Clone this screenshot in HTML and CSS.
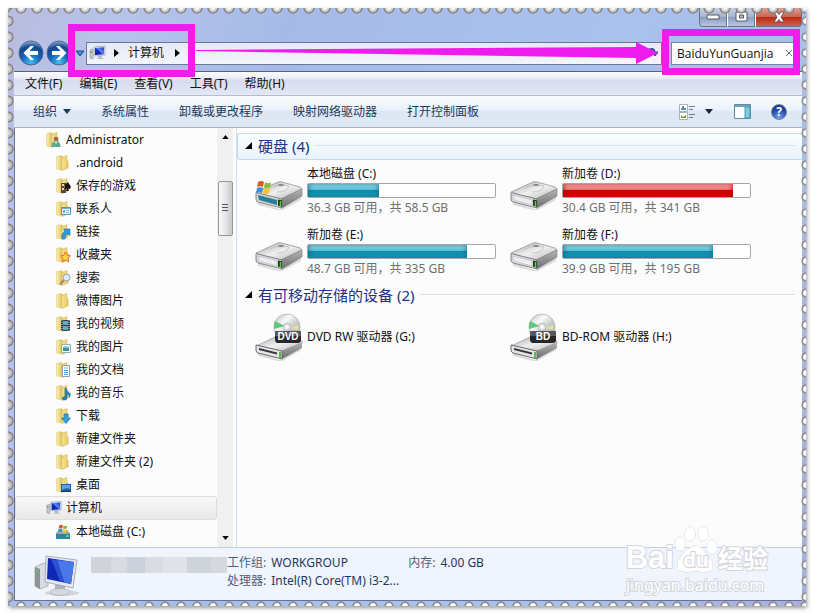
FILE: index.html
```html
<!doctype html>
<html lang="zh-CN">
<head>
  <meta charset="UTF-8">
  <meta name="viewport" content="width=device-width, initial-scale=1">
  <title>计算机</title>
  <link rel="stylesheet" href="styles.css">
</head>
<body>
  <svg class="defs" aria-hidden="true">
    <defs>
      <linearGradient id="gFolder" x1="0" x2="1"><stop offset="0" stop-color="#faf0b4"/><stop offset="1" stop-color="#dfbf57"/></linearGradient>
      <linearGradient id="gScreen" x1="0" y1="1" x2="1" y2="0"><stop offset="0" stop-color="#0a1b9c"/><stop offset=".48" stop-color="#1730cf"/><stop offset=".52" stop-color="#5f8bf0"/><stop offset="1" stop-color="#1a38c8"/></linearGradient>
      <linearGradient id="gMetal" x1="0" x2="1" y2="1"><stop offset="0" stop-color="#a2a2a4"/><stop offset=".5" stop-color="#f0f0f1"/><stop offset="1" stop-color="#b4b4b6"/></linearGradient>
      <linearGradient id="gSide" x1="0" y1="0" x2="0" y2="1"><stop offset="0" stop-color="#b5b5b8"/><stop offset="1" stop-color="#6d6d70"/></linearGradient>
      <linearGradient id="gDisc" x1="0" x2="1" y2="1"><stop offset="0" stop-color="#b9b9b9"/><stop offset=".35" stop-color="#fafafa"/><stop offset=".6" stop-color="#c9c9c9"/><stop offset="1" stop-color="#9d9d9d"/></linearGradient>
      <radialGradient id="gNav" cx=".5" cy=".9" r=".9"><stop offset="0" stop-color="#41c0f2"/><stop offset=".45" stop-color="#1464bb"/><stop offset=".75" stop-color="#15468e"/><stop offset="1" stop-color="#8eb3df"/></radialGradient>
      <symbol id="folder" viewBox="0 0 16 16">
        <path d="M1.500 1.500l5-1 1 1v13.500l-6-1z" fill="url(#gFolder)" stroke="#dcc377" stroke-width=".5"/>
        <path d="M7 2.500l5-2v13l-5 2z" fill="#efd678" stroke="#d3b052" stroke-width=".5"/>
        <path d="M12 5l1.500 1v6.500L12 14z" fill="#e4c462"/>
        <path d="M8 3.500v10.500" stroke="#fbeeb0" stroke-width=".8"/>
      </symbol>
      <symbol id="pc" viewBox="0 0 18 16">
        <path d="M1 5l3-1v10l-3-1z" fill="#c8ccd0" stroke="#8b9299" stroke-width=".6"/><path d="M2 6v2" stroke="#2fa43a"/>
        <path d="M5 2l11-1v9l-11 1z" fill="#dce2ea" stroke="#9aa4b3" stroke-width=".7"/>
        <path d="M6 3l9-.8v7L6 10z" fill="url(#gScreen)"/>
        <path d="M9 11l4-.5v2l2 1.500H7l2-1z" fill="#b6bcc3"/>
      </symbol>
      <symbol id="hdd" viewBox="0 0 48 30">
        <path d="M3 22l22 7 21-13v4L26 31 3 25z" fill="#000" opacity=".12"/>
        <path d="M1 12L23 2q2-.6 4 0l18 5q2 1 2 2L26 19 2 14z" fill="url(#gMetal)" stroke="#8d8d90" stroke-width=".7"/>
        <path d="M26 19L47 9v7L27 28z" fill="url(#gSide)" stroke="#7d7d80" stroke-width=".6"/>
        <path d="M1 13q0-1 2 0l24 6v9L3 22q-2-.5-2-3z" fill="#d9d9db" stroke="#77777a" stroke-width=".9"/>
        <path d="M3 15l19 5v5L4 20z" fill="#eeeef2" stroke="#b2b2b8" stroke-width=".5"/>
        <path d="M23 19.500l4 .8v6.500l-4-1z" fill="#203a1b"/><path d="M25.500 21v5" stroke="#55d23f" stroke-width="1.500"/>
        <path d="M14 9q8-6 20-3-2 6-12 6" fill="none" stroke="#bcbcbe" stroke-width=".8"/><ellipse cx="26" cy="5" rx="3" ry="1" fill="#858588"/>
      </symbol>
      <symbol id="flag" viewBox="0 0 16 16">
        <path d="M2 2q3-2 6 0l-1 5q-3-1.500-6 0z" fill="#e3572d"/><path d="M9 2.300q3 1.700 6 0l-1 5q-3 1.500-6 0z" fill="#86bd34"/>
        <path d="M1 8q3-1.700 6 0l-1 5q-3-1.700-6 0z" fill="#3c8fd4"/><path d="M8 8.300q3 1.500 6 0l-1 5q-3 1.600-6 0z" fill="#f7c631"/>
      </symbol>
      <symbol id="optical" viewBox="0 0 48 48">
        <path d="M3 40l22 7 21-13v3L26 49 3 43z" fill="#000" opacity=".12"/>
        <path d="M1 33l21-10 25 5v3L26 39 2 34z" fill="url(#gMetal)" stroke="#8d8d90" stroke-width=".6"/>
        <path d="M26 38l21-9v6L27 46z" fill="url(#gSide)"/>
        <path d="M1 32l26 6v8L3 40q-2-1-2-3z" fill="#e4e4e6" stroke="#68686b"/>
        <path d="M4 35l18 4.500v2L4 37z" fill="#33353a"/><path d="M25 39v6" stroke="#4cc63a" stroke-width="2"/>
        <circle cx="32" cy="14" r="13" fill="url(#gDisc)" stroke="#aaa" stroke-width=".7"/>
        <path d="M30 13L20 8q-1.500 3-1 8z" fill="#62c77d"/><path d="M34 15l9 2 1-5z" fill="#e4e0a4"/>
        <circle cx="32" cy="14" r="4" fill="#ddd" stroke="#aaa" stroke-width=".6"/><circle cx="32" cy="14" r="1.800" fill="#fff"/>
        <path d="M20 18h26v10q-1 2-3 2H22q-2-1-2-3z" fill="#242629"/><path d="M20 18h26v5H20z" fill="#55585d"/>
      </symbol>
    </defs>
  </svg>

  <div class="stamp">
    <header class="titlebar">
      <div class="caption">
        <button type="button" aria-label="最小化"><svg width="14" height="6" viewBox="0 0 14 6"><path d="M1 1h12v4H1z" fill="#fff" stroke="#555b68"/></svg></button>
        <button type="button" aria-label="最大化"><svg width="13" height="11" viewBox="0 0 13 11"><path d="M1 1h11v9H1z" fill="#fff" stroke="#555b68"/><path d="M4.500 4h4v3h-4z" fill="#aebddd" stroke="#555b68"/></svg></button>
        <button type="button" class="close" aria-label="关闭"><svg width="14" height="12" viewBox="0 0 14 12"><path d="M2 1h3l2 2.500L9 1h3L9 6l3 5H9L7 8.500 5 11H2l3-5z" fill="#fff" stroke="#5c4450" stroke-width=".8"/></svg></button>
      </div>
      <div class="navbar">
        <button type="button" class="nav-button" aria-label="后退"><svg viewBox="0 0 26 26"><circle cx="13" cy="13" r="12" fill="url(#gNav)" stroke="#4c6895"/><path d="M12.500 6h3.500l-4.500 5H20v4h-8.500l4.500 5h-3.500L5.500 13z" fill="#fff"/></svg></button>
        <button type="button" class="nav-button" aria-label="前进"><svg viewBox="0 0 26 26"><circle cx="13" cy="13" r="12" fill="url(#gNav)" stroke="#4c6895"/><path d="M13.500 6H10l4.500 5H6v4h8.500L10 20h3.500l7-7z" fill="#fff"/></svg></button>
        <button type="button" class="recent" aria-label="最近的页面"><svg width="10" height="7" viewBox="0 0 10 7"><path d="M1 1h8L5 6z" fill="#3e8fd0" stroke="#174b86"/></svg></button>
        <div class="address">
          <svg class="pc" viewBox="0 0 18 16"><use href="#pc"/></svg>
          <svg class="crumb" viewBox="0 0 5 8"><path d="M0 0l5 4-5 4z"/></svg>
          <a href="#">计算机</a>
          <svg class="crumb" viewBox="0 0 5 8"><path d="M0 0l5 4-5 4z"/></svg>
          <svg class="refresh" viewBox="0 0 12 12"><path d="M2 2q6-2 6 3M5 5h6L8 9z" stroke="#28538e" fill="#28538e"/></svg>
        </div>
        <form class="search">
          <input type="text" value="BaiduYunGuanjia" aria-label="搜索">
          <button type="button" aria-label="清除"><svg width="8" height="8" viewBox="0 0 8 8"><path d="M1 1l6 6M7 1L1 7" stroke="#4f77a8" fill="none"/></svg></button>
        </form>
      </div>
    </header>

    <nav class="menubar">
      <a href="#">文件(F)</a><a href="#">编辑(E)</a><a href="#">查看(V)</a><a href="#">工具(T)</a><a href="#">帮助(H)</a>
    </nav>

    <div class="toolbar">
      <button type="button">组织<svg width="8" height="5" viewBox="0 0 8 5"><path d="M0 0h8L4 5z" fill="#1e395b"/></svg></button>
      <button type="button">系统属性</button>
      <button type="button">卸载或更改程序</button>
      <button type="button">映射网络驱动器</button>
      <button type="button">打开控制面板</button>
      <div class="tools">
        <button type="button" aria-label="更改视图">
          <svg width="17" height="16" viewBox="0 0 17 16"><path d="M.5.500h8v7h-8zM.5 8.500h8v7h-8z" fill="#fff" stroke="#a9b3ae"/><path d="M2 5h5M3 3h2" stroke="#28659c" stroke-width="1.500"/><path d="M2 11l2 2 3-2v3H2z" fill="#6aa533"/><path d="M10 2.500h6M10 5.500h4M10 10.500h6M10 13.500h4" stroke="#6f7d90"/></svg>
        </button>
        <button type="button" aria-label="更多选项"><svg width="8" height="5" viewBox="0 0 8 5"><path d="M0 0h8L4 5z" fill="#14263f"/></svg></button>
        <button type="button" aria-label="预览窗格"><svg width="17" height="15" viewBox="0 0 17 15"><path d="M.5.500h16v14H.5z" fill="#fff" stroke="#5b89a6"/><path d="M1 1h15v2H1z" fill="#72a5bd"/><path d="M11 3h5v11h-5z" fill="#7fcbe2" stroke="#4d95b0"/></svg></button>
        <button type="button" aria-label="帮助" class="help">?</button>
      </div>
    </div>

    <div class="content">
      <aside class="sidebar">
        <ul class="tree">
          <li class="user"><a href="#"><svg viewBox="0 0 16 16"><use href="#folder"/><circle cx="11" cy="7" r="2.300" fill="#9b6d42"/><path d="M6.500 15q0-6 4.500-6t4.500 6z" fill="#5da893"/><path d="M10 9.500h2l-1 3z" fill="#fff"/></svg>Administrator</a></li>
          <li><a href="#"><svg viewBox="0 0 16 16"><use href="#folder"/></svg>.android</a></li>
          <li><a href="#"><svg viewBox="0 0 16 16"><use href="#folder"/><path d="M6 5h5v10H6z" fill="#5b4832"/><path d="M7 6h2v2H7zM9 8h2v2H9zM7 10h2v2H7z" fill="#e9dcae"/><path d="M12.500 4q4 4 3 6-1 1.500-2.500.5l1 2.500h-3l1-2.500q-2 1-2.500-.5t3-6z" fill="#16130f"/></svg>保存的游戏</a></li>
          <li><a href="#"><svg viewBox="0 0 16 16"><use href="#folder"/><path d="M6.500 6.500h9v7h-9z" fill="#e9f6fd" stroke="#4a96bd"/><path d="M6.500 7h9" stroke="#4a96bd" stroke-width="1.500"/><path d="M8 9.500h2v2H8z" fill="#398bc0"/><path d="M11 9.500h3M11 11.500h3" stroke="#79afc9" stroke-width=".8"/></svg>联系人</a></li>
          <li><a href="#"><svg viewBox="0 0 16 16"><use href="#folder"/><path d="M7 15q-1-6 3-7.500L8.500 5H15v6.500L13 10q-3 1-3 5z" fill="#2f98dc" stroke="#1b6eab" stroke-width=".6"/></svg>链接</a></li>
          <li><a href="#"><svg viewBox="0 0 16 16"><use href="#folder"/><path d="M10.500 5l1.600 3.200 3.400.6-2.500 2.300.5 3.700-3-1.700-3 1.700.5-3.700L5.500 8.800l3.400-.6z" fill="#ffd544" stroke="#e8711e"/></svg>收藏夹</a></li>
          <li><a href="#"><svg viewBox="0 0 16 16"><use href="#folder"/><path d="M9 10l-4 4.500" stroke="#a08362" stroke-width="2"/><circle cx="11.500" cy="7.500" r="3.500" fill="#d7eef7" stroke="#92a3ac"/></svg>搜索</a></li>
          <li><a href="#"><svg viewBox="0 0 16 16"><use href="#folder"/></svg>微博图片</a></li>
          <li><a href="#"><svg viewBox="0 0 16 16"><use href="#folder"/><path d="M6 4h9v11H6z" fill="#2f3a42"/><path d="M8 5h5v4H8zM8 10h5v4H8z" fill="#65a9c8"/><path d="M7 4v11M14 4v11" stroke="#fff" stroke-dasharray="1 1" stroke-width=".8"/></svg>我的视频</a></li>
          <li><a href="#"><svg viewBox="0 0 16 16"><use href="#folder"/><path d="M6.500 5.500h9v8h-9z" fill="#fff" stroke="#8fb0bd"/><path d="M8 7h6v2H8z" fill="#8dcbe8"/><path d="M8 9h6v3H8z" fill="#3f9399"/></svg>我的图片</a></li>
          <li><a href="#"><svg viewBox="0 0 16 16"><use href="#folder"/><path d="M7.500 3.500h7v11h-7z" fill="#fff" stroke="#8c9fb0"/><path d="M9 6h1M11 6h2M9 8.500h4M9 10.500h4M9 12.500h4" stroke="#5d91bd"/></svg>我的文档</a></li>
          <li><a href="#"><svg viewBox="0 0 16 16"><use href="#folder"/><path d="M11 3q0 3 3 4.500t0 5q1-3-2-4v4q0 3-3 2.500t-1-3l2-.5V3z" fill="#2587bd" stroke="#17668f" stroke-width=".6"/></svg>我的音乐</a></li>
          <li><a href="#"><svg viewBox="0 0 16 16"><use href="#folder"/><path d="M9 6h4v4h2.500L11 15.500 6.500 10H9z" fill="#34a2e3" stroke="#1a6ea9" stroke-width=".7"/></svg>下载</a></li>
          <li><a href="#"><svg viewBox="0 0 16 16"><use href="#folder"/></svg>新建文件夹</a></li>
          <li><a href="#"><svg viewBox="0 0 16 16"><use href="#folder"/></svg>新建文件夹 (2)</a></li>
          <li><a href="#"><svg viewBox="0 0 16 16"><use href="#folder"/><path d="M6 7h10v8H6z" fill="#1d5da2"/><path d="M7 8h8v4q-4-2-8 1z" fill="#55aadf"/><path d="M6 14h10v1H6z" fill="#16324f"/></svg>桌面</a></li>
          <li class="computer selected"><a href="#"><svg viewBox="0 0 18 16"><use href="#pc"/></svg>计算机</a></li>
          <li><a href="#"><svg viewBox="0 0 16 16"><path d="M1 9l3-3h8l3 3v5q0 1-1 1H2q-1 0-1-1z" fill="#9aa8ae"/><path d="M1 10h14v4q0 1-1 1H2q-1 0-1-1z" fill="#2a869c"/><path d="M11 12h3" stroke="#7ee05d" stroke-width="1.500"/><use href="#flag" x="3" y="0" width="10" height="10"/></svg>本地磁盘 (C:)</a></li>
        </ul>
        <div class="scrollbar">
          <svg viewBox="0 0 8 5"><path d="M4 0l4 5H0z"/></svg>
          <div class="thumb"></div>
          <svg viewBox="0 0 8 5"><path d="M0 0h8L4 5z"/></svg>
        </div>
      </aside>

      <main class="files">
        <h2 class="group active"><svg viewBox="0 0 7 7"><path d="M7 0v7H0z"/></svg>硬盘 (4)</h2>
        <div class="drives">
          <div class="drive">
            <svg class="drive-icon" viewBox="0 0 48 30"><use href="#hdd"/><path d="M3 15l19 5v5L4 20z" fill="#287f96"/><use href="#flag" x="0" y="0" width="18" height="16"/></svg>
            <div class="info"><span>本地磁盘 (C:)</span><div class="bar"><div class="fill" style="width: 38%"></div></div><small>36.3 GB 可用，共 58.5 GB</small></div>
          </div>
          <div class="drive">
            <svg class="drive-icon" viewBox="0 0 48 30"><use href="#hdd"/></svg>
            <div class="info"><span>新加卷 (D:)</span><div class="bar"><div class="fill full" style="width: 91%"></div></div><small>30.4 GB 可用，共 341 GB</small></div>
          </div>
          <div class="drive">
            <svg class="drive-icon" viewBox="0 0 48 30"><use href="#hdd"/></svg>
            <div class="info"><span>新加卷 (E:)</span><div class="bar"><div class="fill" style="width: 85%"></div></div><small>48.7 GB 可用，共 335 GB</small></div>
          </div>
          <div class="drive">
            <svg class="drive-icon" viewBox="0 0 48 30"><use href="#hdd"/></svg>
            <div class="info"><span>新加卷 (F:)</span><div class="bar"><div class="fill" style="width: 80%"></div></div><small>39.9 GB 可用，共 195 GB</small></div>
          </div>
        </div>
        <h2 class="group"><svg viewBox="0 0 7 7"><path d="M7 0v7H0z"/></svg>有可移动存储的设备 (2)</h2>
        <div class="drives">
          <div class="drive removable">
            <svg class="drive-icon" viewBox="0 0 48 48"><use href="#optical"/><text x="33" y="27" class="badge">DVD</text></svg>
            <span>DVD RW 驱动器 (G:)</span>
          </div>
          <div class="drive removable">
            <svg class="drive-icon" viewBox="0 0 48 48"><use href="#optical"/><text x="33" y="27" class="badge">BD</text></svg>
            <span>BD-ROM 驱动器 (H:)</span>
          </div>
        </div>
      </main>
    </div>

    <footer class="details">
      <svg class="details-icon" viewBox="0 0 46 42">
        <ellipse cx="28" cy="38" rx="17" ry="3" fill="#000" opacity=".12"/>
        <path d="M1 12l9-4 4 2v21l-8 3-5-3z" fill="#d9dce0" stroke="#999fa7" stroke-width=".7"/><path d="M1 12l5 2v20l-5-3z" fill="#8d9498"/><path d="M2 15l2 1" stroke="#54d74c" stroke-width="1.500"/>
        <path d="M21 29l10 2v5H21z" fill="#aeb3ba"/><ellipse cx="26" cy="37" rx="10" ry="3.500" fill="#d5d8dc" stroke="#a1a5aa" stroke-width=".6"/>
        <path d="M12 1l31 4-4 28-28-6z" fill="#e4e8ee" stroke="#979fae" stroke-width=".8"/>
        <path d="M14 3l26 4-3 22-24-5z" fill="#1028b5"/><path d="M23 5l17 2-3 22-7-2z" fill="#4a78e6"/><path d="M23 5l7 22-4-1L17 4z" fill="#2c50d0"/>
      </svg>
      <div class="mosaic"></div>
      <dl class="specs">
        <dt>工作组:</dt><dd>WORKGROUP</dd>
        <dt>处理器:</dt><dd>Intel(R) Core(TM) i3-2...</dd>
      </dl>
      <dl class="specs memory"><dt>内存:</dt><dd>4.00 GB</dd></dl>
    </footer>

    <div class="mark mark-address"></div>
    <svg class="arrow" viewBox="0 0 462 24" preserveAspectRatio="none"><path d="M0 9l440-3V1l22 11-22 11v-6L0 10z" fill="#ee1ded"/></svg>
    <div class="mark mark-search"></div>

    <div class="watermark">
      <div class="logo">
        <span class="bai">Bai</span>
        <span class="paw"><svg viewBox="0 0 44 48"><g fill="#fff" stroke="#cfd1d8"><ellipse cx="6" cy="18" rx="5" ry="7"/><ellipse cx="16" cy="8" rx="5" ry="7"/><ellipse cx="29" cy="8" rx="5" ry="7"/><ellipse cx="38" cy="21" rx="5" ry="7"/><path d="M22 20q5 0 9 6t7 9q3 11-8 11l-8-1-9 1Q1 46 4 35q2-4 6-8 6-7 12-7z"/></g></svg><b>du</b></span>
        <span class="jingyan">经验</span>
      </div>
      <div class="url">jingyan.baidu.com</div>
    </div>
  </div>
</body>
</html>
```
FILE: styles.css
```css
* {
  box-sizing: border-box;
}
body {
  margin: 0;
  padding: 8px;
  min-height: 100vh;
  display: flex;
  background: #fff;
  color: #111;
  font-family: "Noto Sans", "Noto Sans CJK SC", sans-serif;
  font-size: 12px;
  line-height: 16px;
}
a {
  color: inherit;
  text-decoration: none;
}
button {
  display: flex;
  align-items: center;
  justify-content: center;
  padding: 0;
  border: 0;
  background: none;
  color: inherit;
  font: inherit;
}
svg {
  display: block;
  flex: none;
}
.defs {
  position: absolute;
  width: 0;
  height: 0;
}

/* frame with perforated edges */
.stamp {
  position: relative;
  flex: 1;
  min-width: 0;
  display: flex;
  flex-direction: column;
  padding: 0 4px 5px 6px;
  background: linear-gradient(110deg, #b9bddf 0, #b6c3ea 12%, #a5bbe6 28%, #a9c2ec 60%, #a9bfe6 80%, #aaaedb 100%);
  box-shadow: 1px 2px 4px #999;
}
.stamp::after {
  content: "";
  position: absolute;
  inset: 0;
  pointer-events: none;
  background:
    radial-gradient(circle at 8px 0, #fff 1px, #bbb 4px, #777 5px, transparent 6px) 5px 0 / 16px 6px repeat-x,
    radial-gradient(circle at 8px 5px, #fff 2px, #ccc 3px, #777 4px, transparent 5px) 5px 100% / 16px 5px repeat-x,
    radial-gradient(circle at 0 8px, #ddd 1px, #b0b0b0 4px, #777 5px, transparent 6px) 0 5px / 6px 16px repeat-y,
    radial-gradient(circle at 5px 8px, #fff 2px, #ccc 3px, #777 4px, transparent 5px) 100% 5px / 5px 16px repeat-y;
}

.titlebar {
  height: 63px;
}
.caption {
  display: flex;
  justify-content: flex-end;
  height: 19px;
}
.caption button {
  width: 28px;
  padding-bottom: 1px;
  border: 1px solid #69748c;
  border-top: 0;
  border-left-color: #fff;
  background: linear-gradient(#c9d1e3, #a6b2cd 50%, #8c9cbe 51%, #b9c6df);
}
.caption button:first-child {
  border-radius: 0 0 0 4px;
  border-left-color: #69748c;
}
.caption .close {
  width: 47px;
  border-radius: 0 0 4px 0;
  background: linear-gradient(#dfa59b, #cb6350 48%, #ba2b16 52%, #cf6046);
}
.navbar {
  display: flex;
  align-items: center;
  height: 26px;
  margin-top: 13px;
  padding: 0 4px;
}
.nav-button {
  width: 26px;
  height: 26px;
  margin-right: 2px;
}
.nav-button svg {
  width: 26px;
  height: 26px;
}
.recent {
  width: 12px;
}
.address {
  flex: 1;
  display: flex;
  align-items: center;
  height: 23px;
  padding: 0 2px;
  border: 1px solid #68789b;
  background: linear-gradient(#e6e9f7, #f4f4fc);
}
.address a {
  margin: 0 11px 0 9px;
}
.pc {
  width: 18px;
  height: 16px;
  margin-right: 7px;
}
.crumb {
  width: 5px;
  height: 8px;
}
.refresh {
  width: 12px;
  height: 12px;
  margin-left: auto;
}
.search {
  display: flex;
  align-items: center;
  width: 127px;
  height: 23px;
  margin-left: 9px;
  border: 1px solid #7886a6;
  background: #fff;
}
.search input {
  flex: 1;
  width: 100px;
  min-width: 0;
  padding: 0 0 0 5px;
  border: 0;
  background: none;
  color: #111;
  font: 12px "Open Sans", sans-serif;
  outline: 0;
}
.search button {
  width: 16px;
}

.menubar {
  display: flex;
  align-items: center;
  gap: 17px;
  height: 25px;
  padding: 0 11px;
  border-top: 1px solid #56637b;
  border-bottom: 1px solid #b5bcd2;
  background: linear-gradient(#fbfcff, #eceef8 25%, #d8dcef 35%, #e3e6f4);
}
.toolbar {
  display: flex;
  align-items: center;
  gap: 30px;
  height: 32px;
  padding: 0 15px 0 19px;
  border-bottom: 1px solid #a3b3c9;
  background: linear-gradient(#fafdff, #e9f2fb 45%, #dce6f4 50%, #dfe9f6);
  color: #1e395b;
}
.toolbar button {
  gap: 6px;
}
.tools {
  display: flex;
  align-items: center;
  margin-left: auto;
}
.tools button:nth-child(2) {
  margin: 0 21px 0 9px;
}
.tools .help {
  width: 16px;
  height: 16px;
  margin-left: 20px;
  border: 1px solid #71809f;
  border-radius: 50%;
  background: radial-gradient(circle at 50% 90%, #6fa3ee, #1d3d9b 65%);
  color: #fff;
  font-weight: bold;
}

.content {
  flex: 1;
  display: flex;
  background: #fcfcfc;
  border-left: 1px solid #65719a;
}
.sidebar {
  display: flex;
  width: 222px;
  padding-right: 3px;
  border-right: 1px solid #d2dfec;
}
.tree {
  flex: 1;
  margin: 0;
  padding: 0 0 4px;
  list-style: none;
}
.tree a {
  display: flex;
  align-items: center;
  gap: 5px;
  height: 23px;
  padding-left: 40px;
}
.tree svg {
  width: 16px;
  height: 16px;
}
.tree .user a,
.tree .computer a {
  padding-left: 30px;
}
.tree .selected {
  border: 1px solid #dedede;
  border-radius: 3px;
  background: linear-gradient(#f9f9f9, #e8e8e8);
}
.tree .selected a {
  height: 22px;
  gap: 3px;
}
.tree .computer svg {
  width: 17px;
}
.scrollbar {
  display: flex;
  flex-direction: column;
  align-items: center;
  width: 16px;
  padding: 7px 0;
  background: #f0f0f0;
}
.scrollbar svg {
  width: 7px;
  height: 4px;
}
.scrollbar svg:last-child {
  margin-top: auto;
}
.thumb {
  width: 15px;
  height: 55px;
  margin-top: 42px;
  border: 1px solid #979797;
  border-radius: 2px;
  background:
    repeating-linear-gradient(#555 0 1px, transparent 1px 3px) center / 6px 9px no-repeat,
    linear-gradient(90deg, #fafafa, #e6e6e8 50%, #c9c9cd);
}

.files {
  flex: 1;
  min-width: 0;
  padding-top: 5px;
}
.group {
  display: flex;
  align-items: center;
  gap: 6px;
  height: 27px;
  margin: 0;
  padding: 0 6px 2px 7px;
  border: 1px solid transparent;
  color: #1e3287;
  font-size: 15px;
  font-weight: normal;
}
.group svg {
  width: 7px;
  height: 7px;
}
.group::after {
  content: "";
  flex: 1;
  height: 1px;
  background: #dce1e8;
}
.group.active {
  border-color: #c3dcec;
  border-right: 0;
  border-radius: 3px 0 0 3px;
  background: linear-gradient(#fafdff, #e8f3fd);
}
.drives {
  display: grid;
  grid-template-columns: repeat(auto-fill, 255px);
  padding-left: 18px;
}
.drive {
  display: flex;
  align-items: center;
  gap: 4px;
  height: 61px;
}
.drive-icon {
  width: 48px;
  height: 30px;
  margin-top: 8px;
}
.removable {
  height: 55px;
}
.removable .drive-icon {
  height: 48px;
  margin-top: 0;
}
.badge {
  fill: #fff;
  font: bold 10px "Liberation Sans", sans-serif;
  text-anchor: middle;
}
.info {
  width: 189px;
}
.info span,
.info small {
  display: block;
}
.info small {
  color: #707070;
  font-size: 12px;
}
.bar {
  height: 15px;
  margin: 1px 0 2px;
  border: 1px solid #a6a6a6;
  border-radius: 2px;
  background: #fff;
}
.fill {
  height: 100%;
  background: linear-gradient(#a5e5f1, #55bfd6 45%, #128ba8 50%, #16a2bf);
  box-shadow: inset 2px 0 4px #0a668480, inset -2px 0 4px #0a668480;
}
.fill.full {
  background: linear-gradient(#fbc1c1, #ee6b6b 45%, #d00000 50%, #d90808);
  box-shadow: inset 2px 0 4px #b1000080, inset -2px 0 4px #b1000080;
}

.details {
  display: flex;
  align-items: flex-start;
  height: 54px;
  padding: 7px 19px;
  border: 1px solid #65719a;
  border-top-color: #bfd0e4;
  border-right: 0;
  background: #f0f4fc;
  color: #1e395b;
}
.details-icon {
  width: 46px;
  height: 42px;
}
.mosaic {
  width: 136px;
  height: 16px;
  margin: 2px 0 0 11px;
  background: linear-gradient(90deg, #d0d4da 0 20px, #d8dce2 20px 36px, #cdd2da 36px 54px, #d9dde3 54px 72px, #dfe2e9 72px 96px, #cfd3da 96px 120px, #d5d8dd 120px);
}
.specs {
  display: grid;
  grid-template-columns: auto auto;
  gap: 2px 5px;
  margin: 0;
}
.specs dt {
  color: #4d5f79;
}
.specs dd {
  margin: 0;
}
.memory {
  margin-left: 9px;
}

/* callouts over the window */
.mark {
  position: absolute;
  border: 7px solid #ee1ded;
}
.mark-address {
  top: 16px;
  left: 60px;
  width: 127px;
  height: 53px;
}
.mark-search {
  top: 21px;
  right: 6px;
  width: 138px;
  height: 46px;
}
.arrow {
  position: absolute;
  top: 33px;
  left: 188px;
  width: calc(100% - 336px);
  height: 24px;
}

.watermark {
  position: absolute;
  right: 38px;
  bottom: 12px;
  color: #fff;
  -webkit-text-stroke: 2px #d3d5dc;
  paint-order: stroke fill;
}
.logo {
  display: flex;
  align-items: flex-end;
  height: 48px;
  margin-bottom: 2px;
}
.bai {
  font: bold 31px/32px "Liberation Sans", sans-serif;
}
.paw {
  position: relative;
}
.paw svg {
  width: 44px;
  height: 48px;
}
.paw b {
  position: absolute;
  inset: 24px 0 0;
  font-size: 20px;
  line-height: 20px;
  text-align: center;
}
.jingyan {
  font-size: 25px;
  font-weight: bold;
  line-height: 32px;
}
.url {
  font-size: 16px;
  line-height: 18px;
}
```
